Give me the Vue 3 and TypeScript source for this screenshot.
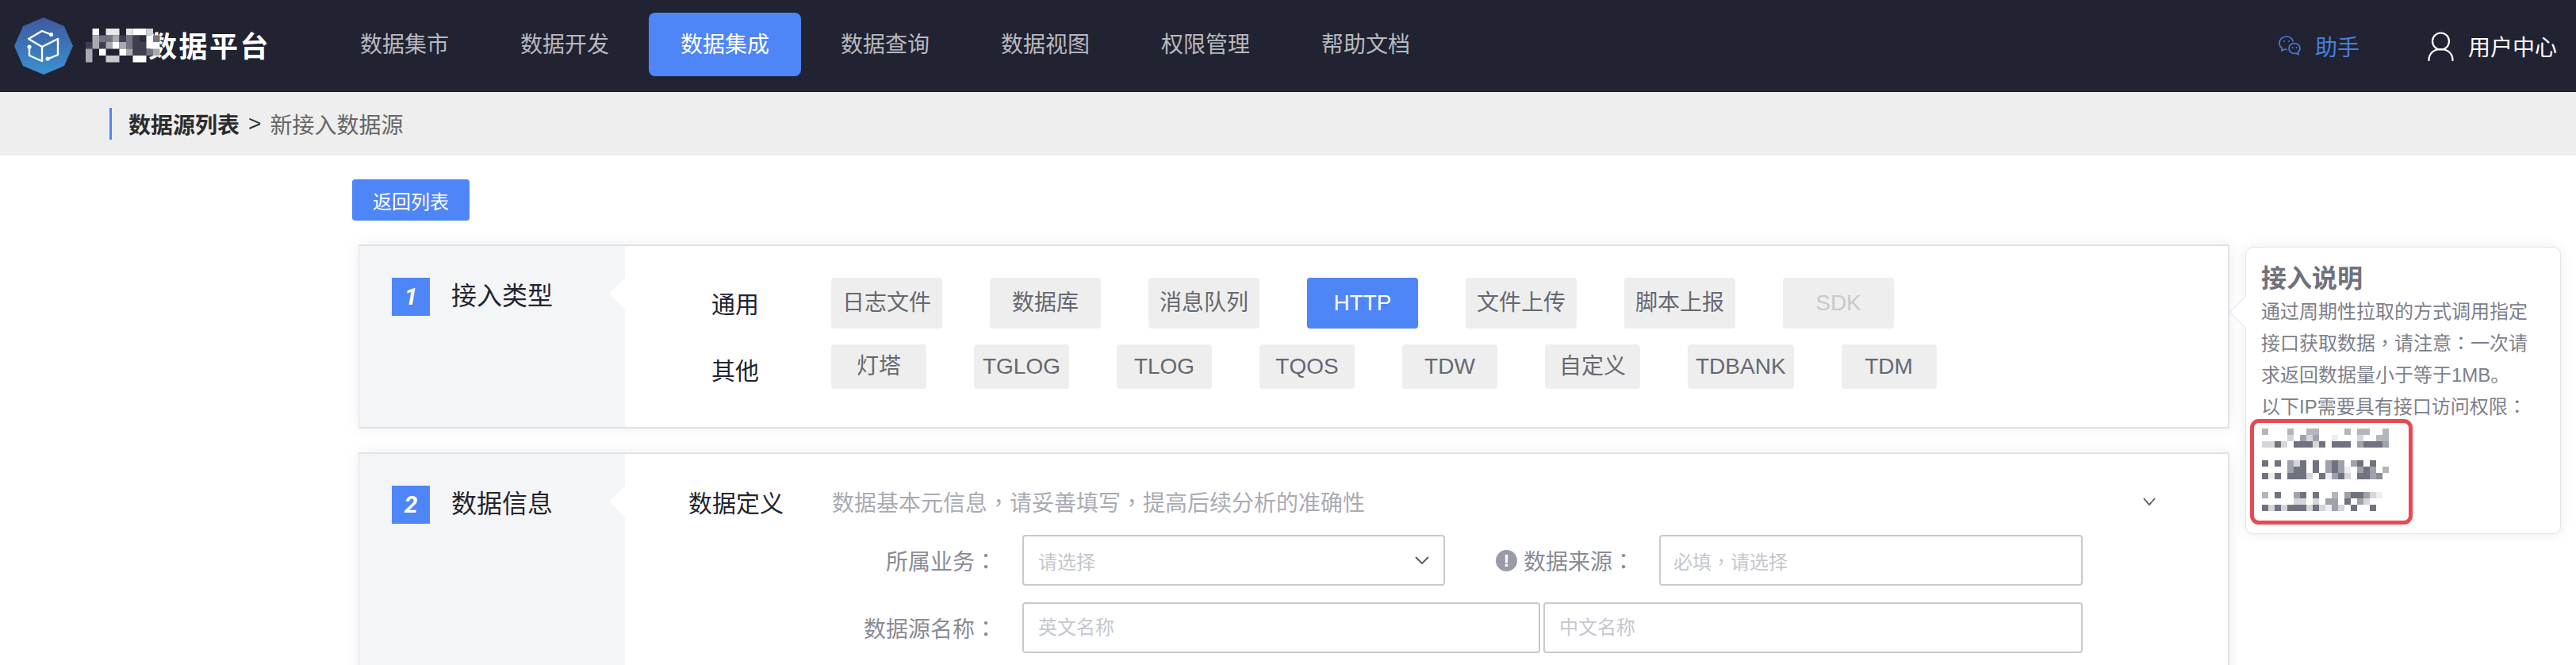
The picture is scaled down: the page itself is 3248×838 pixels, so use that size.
<template>
  <div class="page">
    <header class="nav">
      <div class="brand">
        <svg class="brand-icon" viewBox="18 20 74 72" width="74" height="72">
          <defs>
            <linearGradient id="brandFill" x1="0" y1="0" x2="0" y2="1">
              <stop offset="0" stop-color="#3f58a0" />
              <stop offset="1" stop-color="#3a92d0" />
            </linearGradient>
          </defs>
          <polygon points="55,20 81,31 92,56 81,81 55,92 29,81 18,56 29,31" fill="url(#brandFill)" />
          <g fill="none" stroke="#fff" stroke-width="2.4" stroke-linecap="round" stroke-linejoin="round">
            <path d="M63 41 53 37 36 47 53 57 73 47" />
            <path d="M37 57V68L53 75V57" />
            <path d="M73 47V67L61 72" />
          </g>
          <circle cx="64.5" cy="41.5" r="2.6" fill="#fff" />
          <circle cx="37" cy="57" r="2.6" fill="#fff" />
          <circle cx="60" cy="72" r="2.6" fill="#fff" />
        </svg>
        <svg class="brand-mosaic" width="94" height="43" viewBox="0 0 94 43">
          <rect
            v-for="(c, i) in brandCells"
            :key="i"
            :x="c.x"
            :y="c.y"
            width="8.5"
            height="8.5"
            :fill="c.fill"
          />
        </svg>
        <span class="brand-name">数据平台</span>
      </div>

      <nav class="menu">
        <a
          v-for="item in menus"
          :key="item"
          class="menu-item"
          :class="{ active: item === activeMenu }"
        >{{ item }}</a>
      </nav>

      <div class="nav-right">
        <a class="helper">
          <svg width="28" height="26" viewBox="0 0 28 26" fill="none" stroke="#4a7fe0" stroke-width="1.6">
            <path d="M18.5 7.5C17.2 3.6 14.2 1 10 1 4.900 1 1 4.700 1 9.200c0 2.800 1.300 4.900 3.400 6.400L3.800 19l3.900-1.900c1 .3 2 .4 3 .4" stroke-linejoin="round" />
            <path d="M20 9.500c-3.900 0-7 2.900-7 6.500s3.100 6.500 7 6.500c.8 0 1.600-.1 2.300-.4l2.700 1.700-.5-2.900c1.500-1.200 2.500-3 2.500-4.900 0-3.600-3.100-6.500-7-6.500Z" stroke-linejoin="round" />
            <circle cx="7" cy="7" r="1" fill="#4a7fe0" stroke="none" />
            <circle cx="13" cy="7" r="1" fill="#4a7fe0" stroke="none" />
            <circle cx="17.500" cy="15" r="1" fill="#4a7fe0" stroke="none" />
            <circle cx="22.500" cy="15" r="1" fill="#4a7fe0" stroke="none" />
          </svg>
          <span>助手</span>
        </a>
        <a class="user">
          <svg width="33" height="37" viewBox="0 0 33 37" fill="none" stroke="#fff" stroke-width="2.200" stroke-linecap="round">
            <circle cx="16.500" cy="12" r="10.500" />
            <path d="M1.500 36c0-8.500 6-14 15-14s15 5.500 15 14" />
          </svg>
          <span>用户中心</span>
        </a>
      </div>
    </header>

    <div class="crumb">
      <div class="crumb-inner">
        <strong>数据源列表</strong>
        <span class="crumb-sep">&gt;</span>
        <span class="crumb-now">新接入数据源</span>
      </div>
    </div>

    <main class="content">
      <button class="back-btn" type="button">返回列表</button>

      <section class="card">
        <aside class="step">
          <i class="step-no">1</i>
          <span class="step-name">接入类型</span>
        </aside>
        <div class="type-body">
          <div class="type-row">
            <span class="type-label">通用</span>
            <div class="tags tags-lg">
              <a
                v-for="tag in commonTypes"
                :key="tag"
                class="tag"
                :class="{ active: tag === 'HTTP', disabled: tag === 'SDK' }"
              >{{ tag }}</a>
            </div>
          </div>
          <div class="type-row">
            <span class="type-label">其他</span>
            <div class="tags">
              <a v-for="tag in otherTypes" :key="tag" class="tag">{{ tag }}</a>
            </div>
          </div>
        </div>

        <div class="tip">
          <h4 class="tip-title">接入说明</h4>
          <p class="tip-text">
            通过周期性拉取的方式调用指定<br />接口获取数据<span class="cp">，</span>请注意<span class="cp">：</span>一次请<br />求返回数据量小于等于1MB。<br />以下IP需要具有接口访问权限<span class="cp">：</span>
          </p>
          <svg class="tip-mosaic" width="160" height="112" viewBox="0 0 160 112">
            <rect
              v-for="(c, i) in ipCells"
              :key="i"
              :x="c.x"
              :y="c.y"
              width="8"
              height="8"
              :fill="c.fill"
            />
          </svg>
          <div class="tip-mark"></div>
        </div>
      </section>

      <section class="card">
        <aside class="step step-tall">
          <i class="step-no">2</i>
          <span class="step-name">数据信息</span>
        </aside>
        <div class="info-body">
          <div class="info-head">
            <span class="info-title">数据定义</span>
            <span class="info-desc">数据基本元信息<span class="cp">，</span>请妥善填写<span class="cp">，</span>提高后续分析的准确性</span>
            <svg class="chevron info-chevron" width="16" height="10" viewBox="0 0 16 10">
              <path d="M1 1 8 9 15 1" />
            </svg>
          </div>

          <div class="form-row">
            <label class="field-label">所属业务<span class="cp">：</span></label>
            <div class="select">
              <span>请选择</span>
              <svg class="chevron" width="18" height="10" viewBox="0 0 18 10">
                <path d="M1 1 9 9 17 1" />
              </svg>
            </div>
            <label class="field-label field-label-second">
              <span class="warn">!</span>数据来源<span class="cp">：</span>
            </label>
            <input class="field field-source" placeholder="必填，请选择" />
          </div>

          <div class="form-row">
            <label class="field-label">数据源名称<span class="cp">：</span></label>
            <input class="field field-en" placeholder="英文名称" />
            <input class="field field-cn" placeholder="中文名称" />
          </div>
        </div>
      </section>
    </main>
  </div>
</template>

<script setup lang="ts">
const menus = ['数据集市', '数据开发', '数据集成', '数据查询', '数据视图', '权限管理', '帮助文档']
const activeMenu = '数据集成'

const commonTypes = ['日志文件', '数据库', '消息队列', 'HTTP', '文件上传', '脚本上报', 'SDK']
const otherTypes = ['灯塔', 'TGLOG', 'TLOG', 'TQOS', 'TDW', '自定义', 'TDBANK', 'TDM']

// 打码区域，每个字符对应一个色块
const toCells = (rows: string[], size: number, shades: Record<string, string>) =>
  rows.flatMap((row, y) =>
    [...row].flatMap((ch, x) =>
      shades[ch] ? [{ x: x * size, y: y * size, fill: shades[ch] }] : [],
    ),
  )

const brandCells = toCells(
  [
    '.W.ww.wWWs.',
    '.lggldgdDWg',
    'dldlWlgddWW',
    'l.W..Wlddgl',
    'l..LL..WW..',
  ],
  8.5,
  { W: '#ffffff', w: '#e8e8ea', s: '#d0d0d5', L: '#c8c8ce', l: '#a9a9b1', g: '#73747f', d: '#3e4050', D: '#2c2e3d' },
)

const ipCells = toCells(
  [
    'c...c..cc....c.cc..c',
    '....l.mlm..f...l..cc',
    'llal.aaala.aaa.maaam',
    '....................',
    '....................',
    'a.a.mla.a.mam.ma a..',
    '....maa.a.mamf.mam.c',
    'afa.aaal.afmal.aamb.',
    '....................',
    '....................',
    'c.a..ma.a..c.maamlf.',
    '.....ll.l.mm.a.ml...',
    'alalaaalalfml a..a..',
    '....................',
  ],
  8,
  { a: '#70737f', m: '#a0a2ab', b: '#8a8c96', c: '#b4b6bd', l: '#d5d6da', f: '#eeeef0' },
)
</script>

<style>
html,
body {
  margin: 0;
  background: #fff;
}
</style>

<style scoped>
.page {
  height: 838px;
  overflow: hidden;
  font-family: "Liberation Sans", "Noto Sans CJK SC", sans-serif;
  font-size: 28px;
  color: #333;
}

.cp {
  font-family: "Noto Sans CJK TC", sans-serif;
  line-height: 0;
}

.nav {
  display: flex;
  height: 116px;
  background: #212332;
}

.brand {
  display: flex;
  align-items: center;
  width: 414px;
  padding-left: 18px;
  box-sizing: border-box;
  flex: none;
}

.brand-icon {
  flex: none;
  margin-right: 16px;
}

.brand-mosaic {
  flex: none;
  margin-right: -15px;
  margin-top: -1px;
  position: relative;
  z-index: 1;
}

.brand-name {
  margin-top: -5px;
  font-size: 36px;
  font-weight: 700;
  letter-spacing: 2.500px;
  color: #fff;
  white-space: nowrap;
}

.menu {
  display: flex;
  gap: 10px;
  padding-top: 16px;
}

.menu-item {
  width: 192px;
  height: 80px;
  line-height: 81px;
  text-align: center;
  border-radius: 8px;
  color: #b8b9bf;
}

.menu-item.active {
  background: #4e86f7;
  color: #fff;
}

.nav-right {
  display: flex;
  align-items: center;
  gap: 86px;
  margin-left: auto;
  padding-right: 24px;
}

.helper,
.user {
  display: flex;
  align-items: center;
  gap: 18px;
}

.helper {
  color: #4a7fe0;
}

.user {
  color: #fff;
}

.crumb {
  display: flex;
  align-items: center;
  height: 80px;
  padding-left: 138px;
  background: #eeeeef;
}

.crumb-inner {
  display: flex;
  align-items: center;
  height: 40px;
  padding-left: 21px;
  border-left: 3px solid #4e86f7;
}

.crumb-inner strong {
  color: #2c2c2e;
  font-weight: 700;
}

.crumb-sep {
  margin: 0 11px;
  color: #333;
}

.crumb-now {
  color: #666;
}

.content {
  display: flex;
  flex-direction: column;
  gap: 30px;
  width: 2359px;
  margin-left: 452px;
  padding-top: 30px;
}

.back-btn {
  align-self: flex-start;
  width: 148px;
  height: 52px;
  margin-left: -8px;
  padding: 0;
  border: 0;
  border-radius: 4px;
  background: #4e86f7;
  color: #fff;
  font-family: inherit;
  font-size: 24px;
}

.card {
  position: relative;
  display: flex;
  flex: none;
  border: solid #dfe2e7;
  border-width: 2px 2px 2px 1px;
  background: #fff;
  box-shadow: 0 0 18px rgba(0, 0, 0, 0.07);
}

.step {
  position: relative;
  display: flex;
  align-items: flex-start;
  gap: 27px;
  flex: none;
  width: 335px;
  padding: 40px 0 0 41px;
  box-sizing: border-box;
  background: #f4f5f6;
}

.step::after {
  content: "";
  position: absolute;
  top: 40px;
  right: 0;
  width: 20px;
  height: 40px;
  background: #fff;
  clip-path: polygon(100% 0, 0 50%, 100% 100%);
}

.step-tall {
  min-height: 400px;
}

.step-no {
  width: 48px;
  height: 48px;
  line-height: 48px;
  text-align: center;
  background: #4e86f7;
  color: #fff;
  font-family: "Roboto", sans-serif;
  font-size: 30px;
  font-weight: 700;
  font-style: italic;
}

.step-name {
  font-size: 32px;
  line-height: 46px;
  color: #23252f;
}

.type-body {
  display: flex;
  flex-direction: column;
  gap: 18px;
  padding: 40px 0 38px 109px;
}

.type-row {
  display: flex;
  height: 66px;
}

.type-label {
  width: 151px;
  flex: none;
  font-size: 30px;
  line-height: 68px;
  color: #23252f;
}

.tags {
  display: flex;
  gap: 60px;
}

.tag {
  min-width: 120px;
  height: 56px;
  padding: 0 10px;
  box-sizing: border-box;
  line-height: 56px;
  text-align: center;
  border-radius: 4px;
  background: #eeeeef;
  color: #666870;
}

.tags-lg .tag {
  width: 140px;
  height: 64px;
  line-height: 64px;
}

.tag.active {
  background: #4e86f7;
  color: #fff;
}

.tag.disabled {
  color: #c8c9cd;
}

.tip {
  position: absolute;
  top: 1px;
  left: calc(100% + 22px);
  width: 398px;
  height: 362px;
  padding: 17px 0 0 19px;
  box-sizing: border-box;
  border: 1px solid #e4e5e8;
  border-radius: 10px;
  background: #fff;
  box-shadow: 0 0 16px rgba(0, 0, 0, 0.08);
}

.tip::before {
  content: "";
  position: absolute;
  top: 67px;
  left: -15px;
  width: 28px;
  height: 28px;
  border: solid #e4e7ee;
  border-width: 0 0 1px 1px;
  background: #fff;
  transform: rotate(45deg);
}

.tip-title {
  position: relative;
  margin: 0;
  font-size: 32px;
  line-height: 44px;
  font-weight: 700;
  color: #6f727c;
}

.tip-text {
  position: relative;
  margin: 0;
  font-size: 24px;
  line-height: 40px;
  color: #7d808a;
  white-space: nowrap;
}

.tip-mosaic {
  position: absolute;
  top: 228px;
  left: 20px;
}

.tip-mark {
  position: absolute;
  top: 216px;
  left: 5px;
  width: 205px;
  height: 133px;
  box-sizing: border-box;
  border: 5px solid #e54b50;
  border-radius: 11px;
}

.info-body {
  flex: 1;
  padding-top: 40px;
}

.info-head {
  display: flex;
  align-items: center;
  height: 40px;
  margin-bottom: 22px;
  padding-left: 80px;
}

.info-title {
  width: 181px;
  flex: none;
  font-size: 30px;
  color: #23252f;
}

.info-desc {
  color: #a9abb2;
}

.info-chevron {
  margin-left: auto;
  margin-right: 91px;
}

.chevron {
  flex: none;
  fill: none;
  stroke: #55575f;
  stroke-width: 1.800;
}

.form-row {
  display: flex;
  align-items: center;
  margin-bottom: 21px;
}

.field-label {
  width: 469px;
  flex: none;
  display: flex;
  justify-content: flex-end;
  align-items: center;
  margin-right: 32px;
  box-sizing: border-box;
  color: #8a8b94;
}

.field-label-second {
  width: 239px;
  margin-right: 31px;
}

.warn {
  width: 27px;
  height: 27px;
  margin-right: 8px;
  line-height: 27px;
  text-align: center;
  border-radius: 50%;
  background: #9a9ca5;
  color: #fff;
  font-size: 22px;
  font-weight: 700;
}

.select,
.field {
  height: 64px;
  box-sizing: border-box;
  border: 2px solid #c9cacd;
  border-radius: 4px;
  background: #fff;
  font-family: inherit;
  font-size: 24px;
}

.select {
  display: flex;
  align-items: center;
  justify-content: space-between;
  flex: none;
  width: 533px;
  padding: 0 18px 0 18px;
  color: #c4c7cf;
}

.field {
  flex: none;
  padding: 0 0 0 18px;
  outline: none;
}

.field::placeholder {
  color: #c4c7cf;
}

.field-source {
  width: 534px;
  padding-left: 16px;
  font-family: "Noto Sans CJK TC", sans-serif;
}

.field-en {
  width: 653px;
}

.field-cn {
  width: 680px;
  margin-left: 4px;
}
</style>
